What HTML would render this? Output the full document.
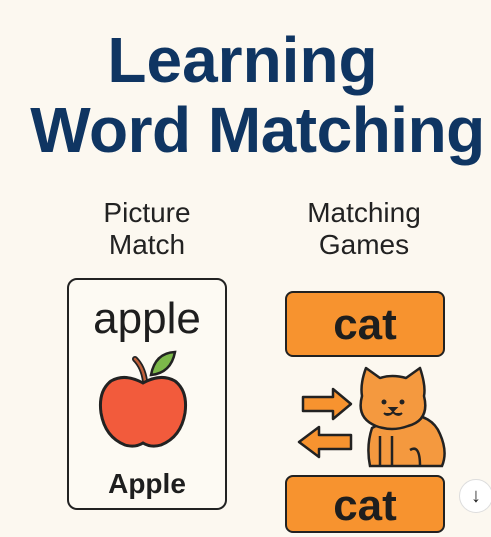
<!DOCTYPE html>
<html><head><style>
html,body{margin:0;padding:0}
body{width:491px;height:537px;background:#fcf8f0;position:relative;overflow:hidden;font-family:"Liberation Sans",sans-serif}
.t{position:absolute;left:0;width:491px;text-align:center;color:#0f3562;font-weight:bold;white-space:nowrap}
.s{position:absolute;text-align:center;color:#222;font-size:28px;line-height:32px;width:200px}
.card{position:absolute;left:67px;top:278px;width:156px;height:228px;border:2.5px solid #222;border-radius:10px;background:#fdfaf3}
.cat{position:absolute;left:285px;width:156px;background:#f7932f;border:2.5px solid #222;border-radius:8px;text-align:center;font-weight:bold;font-size:44px;color:#1e1e1e}
</style></head><body>
<div class="t" style="top:22px;font-size:64px;line-height:76px;left:-3px">Learning</div>
<div class="t" style="top:92px;font-size:64px;line-height:76px;left:12px;letter-spacing:-0.5px">Word Matching</div>
<div class="s" style="left:47px;top:197px">Picture<br>Match</div>
<div class="s" style="left:264px;top:197px">Matching<br>Games</div>
<div class="card">
<div style="position:absolute;top:14px;width:100%;text-align:center;font-size:44px;color:#1e1e1e">apple</div>
<div style="position:absolute;top:188px;width:100%;text-align:center;font-size:28px;color:#1e1e1e;font-weight:bold">Apple</div>
</div>
<svg style="position:absolute;left:95px;top:345px" width="100" height="110" viewBox="0 0 100 110">
<path d="M50 36 Q48 22 40 14" stroke="#222" stroke-width="6" fill="none" stroke-linecap="round"/>
<path d="M50 36 Q48 22 40 14" stroke="#c0603a" stroke-width="2.5" fill="none" stroke-linecap="round"/>
<path d="M56 30 Q60 8 80 7 Q76 28 56 30Z" fill="#7cb84a" stroke="#222" stroke-width="2.5"/>
<path d="M48 38 Q30 28 16 36 Q3 46 6 68 Q10 92 30 100 Q40 103 48 98 Q56 103 66 100 Q86 92 90 68 Q93 46 80 36 Q66 28 48 38Z" fill="#f25b3c" stroke="#222" stroke-width="3"/>
</svg>
<div class="cat" style="top:291px;height:62px;line-height:64px">cat</div>
<div class="cat" style="top:475px;height:54px;line-height:58px">cat</div>
<svg style="position:absolute;left:295px;top:385px" width="65" height="75" viewBox="0 0 65 75">
<path d="M8 12 H38 V4 L56 19 L38 34 V26 H8Z" fill="#f7932f" stroke="#222" stroke-width="2.5" stroke-linejoin="round"/>
<path d="M56 50 H24 V42 L4 57 L24 72 V64 H56Z" fill="#f7932f" stroke="#222" stroke-width="2.5" stroke-linejoin="round"/>
</svg>
<svg style="position:absolute;left:358px;top:366px" width="90" height="106" viewBox="0 0 90 106">
<path d="M36 50 Q72 44 82 68 Q90 86 84 100 H12 Q8 80 14 62Z" fill="#f4993f" stroke="#222" stroke-width="2.5"/>
<path d="M8 2 L22 12 Q34 8 48 12 L62 2 Q68 20 66 30 Q72 54 50 60 Q34 66 18 60 Q-2 52 4 30 Q2 18 8 2Z" fill="#f4993f" stroke="#222" stroke-width="2.5" stroke-linejoin="round"/>
<circle cx="26" cy="36" r="2.5" fill="#222"/><circle cx="44" cy="36" r="2.5" fill="#222"/>
<path d="M32 42 L38 42 L35 45Z M26 47 Q30 51 35 46 Q40 51 44 47" stroke="#222" stroke-width="2" fill="#222"/>
<path d="M22 70 V100 M34 70 V100 M52 84 Q62 78 62 100" stroke="#222" stroke-width="2.5" fill="none"/>
</svg>
<div style="position:absolute;left:459px;top:479px;width:34px;height:34px;border-radius:50%;background:#fff;border:1px solid #ddd;box-sizing:border-box;text-align:center;font-size:20px;line-height:32px;color:#222">↓</div>
</body></html>
